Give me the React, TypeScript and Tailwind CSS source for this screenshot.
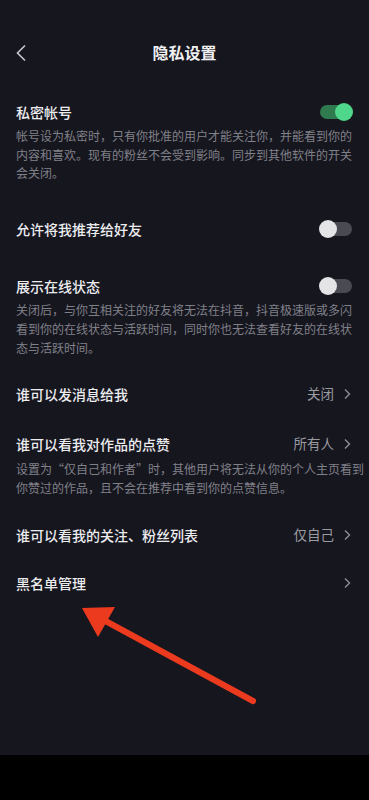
import React from "react";

const font = { fontFamily: '"Noto Sans CJK SC", "Noto Sans", sans-serif' };

function Toggle({ on }: { on: boolean }) {
  return (
    <div className="relative w-[34px] h-[18px] flex items-center">
      <div className={`w-[32px] h-[14px] rounded-full ml-[1px] ${on ? "bg-[#2f7a4e]" : "bg-[#4a4a52]"}`} />
      <div
        className={`absolute top-0 w-[18px] h-[18px] rounded-full ${on ? "right-0 bg-[#4fd88c]" : "left-0 bg-[#e4e4e6]"}`}
      />
    </div>
  );
}

function Chevron() {
  return (
    <svg width="8" height="12" viewBox="0 0 8 12" className="ml-[9px]">
      <path d="M2 1.5 L6.5 6 L2 10.5" fill="none" stroke="#8e8e94" strokeWidth="1.4" />
    </svg>
  );
}

function Row({ label, right }: { label: string; right: React.ReactNode }) {
  return (
    <div className="flex items-center justify-between h-[22px]">
      <span className="text-[14px] font-medium text-[#ececef] leading-[22px]">{label}</span>
      {right}
    </div>
  );
}

function Value({ text }: { text?: string }) {
  return (
    <div className="flex items-center pr-[2px]">
      {text && <span className="text-[13.5px] text-[#9a9aa1]">{text}</span>}
      <Chevron />
    </div>
  );
}

function Desc({ lines, lh }: { lines: string[]; lh: string }) {
  return (
    <div className={`text-[12px] text-[#808088] ${lh}`}>
      {lines.map((l, i) => (
        <div key={i} className="whitespace-nowrap">
          {l}
        </div>
      ))}
    </div>
  );
}

export default function App() {
  return (
    <div className="w-[369px] h-[800px] bg-black relative overflow-hidden" style={font}>
      <div className="h-[755px] bg-[#16161f]">
        {/* header */}
        <div className="pt-[30px]">
          <div className="relative h-[44px] flex items-center justify-center">
            <svg width="12" height="18" viewBox="0 0 12 18" className="absolute left-[15px] top-[14px]">
              <path d="M10 1.5 L2.5 9 L10 16.5" fill="none" stroke="#c9c9cd" strokeWidth="1.6" />
            </svg>
            <span className="text-[16px] font-bold text-[#f0f0f2]">隐私设置</span>
          </div>
        </div>

        <div className="px-4 pr-[16px]">
          <div className="mt-[27px]">
            <Row label="私密帐号" right={<Toggle on={true} />} />
            <div className="mt-[4px]">
              <Desc
                lh="leading-[18.5px]"
                lines={[
                  "帐号设为私密时，只有你批准的用户才能关注你，并能看到你的",
                  "内容和喜欢。现有的粉丝不会受到影响。同步到其他软件的开关",
                  "会关闭。",
                ]}
              />
            </div>
          </div>

          <div className="mt-[35px]">
            <Row label="允许将我推荐给好友" right={<Toggle on={false} />} />
          </div>

          <div className="mt-[35px]">
            <Row label="展示在线状态" right={<Toggle on={false} />} />
            <div className="mt-[3px]">
              <Desc
                lh="leading-[19px]"
                lines={[
                  "关闭后，与你互相关注的好友将无法在抖音，抖音极速版或多闪",
                  "看到你的在线状态与活跃时间，同时你也无法查看好友的在线状",
                  "态与活跃时间。",
                ]}
              />
            </div>
          </div>

          <div className="mt-[26px]">
            <Row label="谁可以发消息给我" right={<Value text="关闭" />} />
          </div>

          <div className="mt-[28px]">
            <Row label="谁可以看我对作品的点赞" right={<Value text="所有人" />} />
            <div className="mt-[4px]">
              <Desc
                lh="leading-[19px]"
                lines={[
                  "设置为“仅自己和作者”时，其他用户将无法从你的个人主页看到",
                  "你赞过的作品，且不会在推荐中看到你的点赞信息。",
                ]}
              />
            </div>
          </div>

          <div className="mt-[27px]">
            <Row label="谁可以看我的关注、粉丝列表" right={<Value text="仅自己" />} />
          </div>

          <div className="mt-[26px]">
            <Row label="黑名单管理" right={<Value />} />
          </div>
        </div>
      </div>

      {/* annotation arrow */}
      <svg className="absolute left-0 top-0 pointer-events-none" width="369" height="800" viewBox="0 0 369 800">
        <line x1="253" y1="701" x2="100" y2="618" stroke="#ec3a1f" strokeWidth="6" strokeLinecap="round" />
        <polygon points="82,608 115,607 98,637" fill="#ec3a1f" />
      </svg>
    </div>
  );
}
